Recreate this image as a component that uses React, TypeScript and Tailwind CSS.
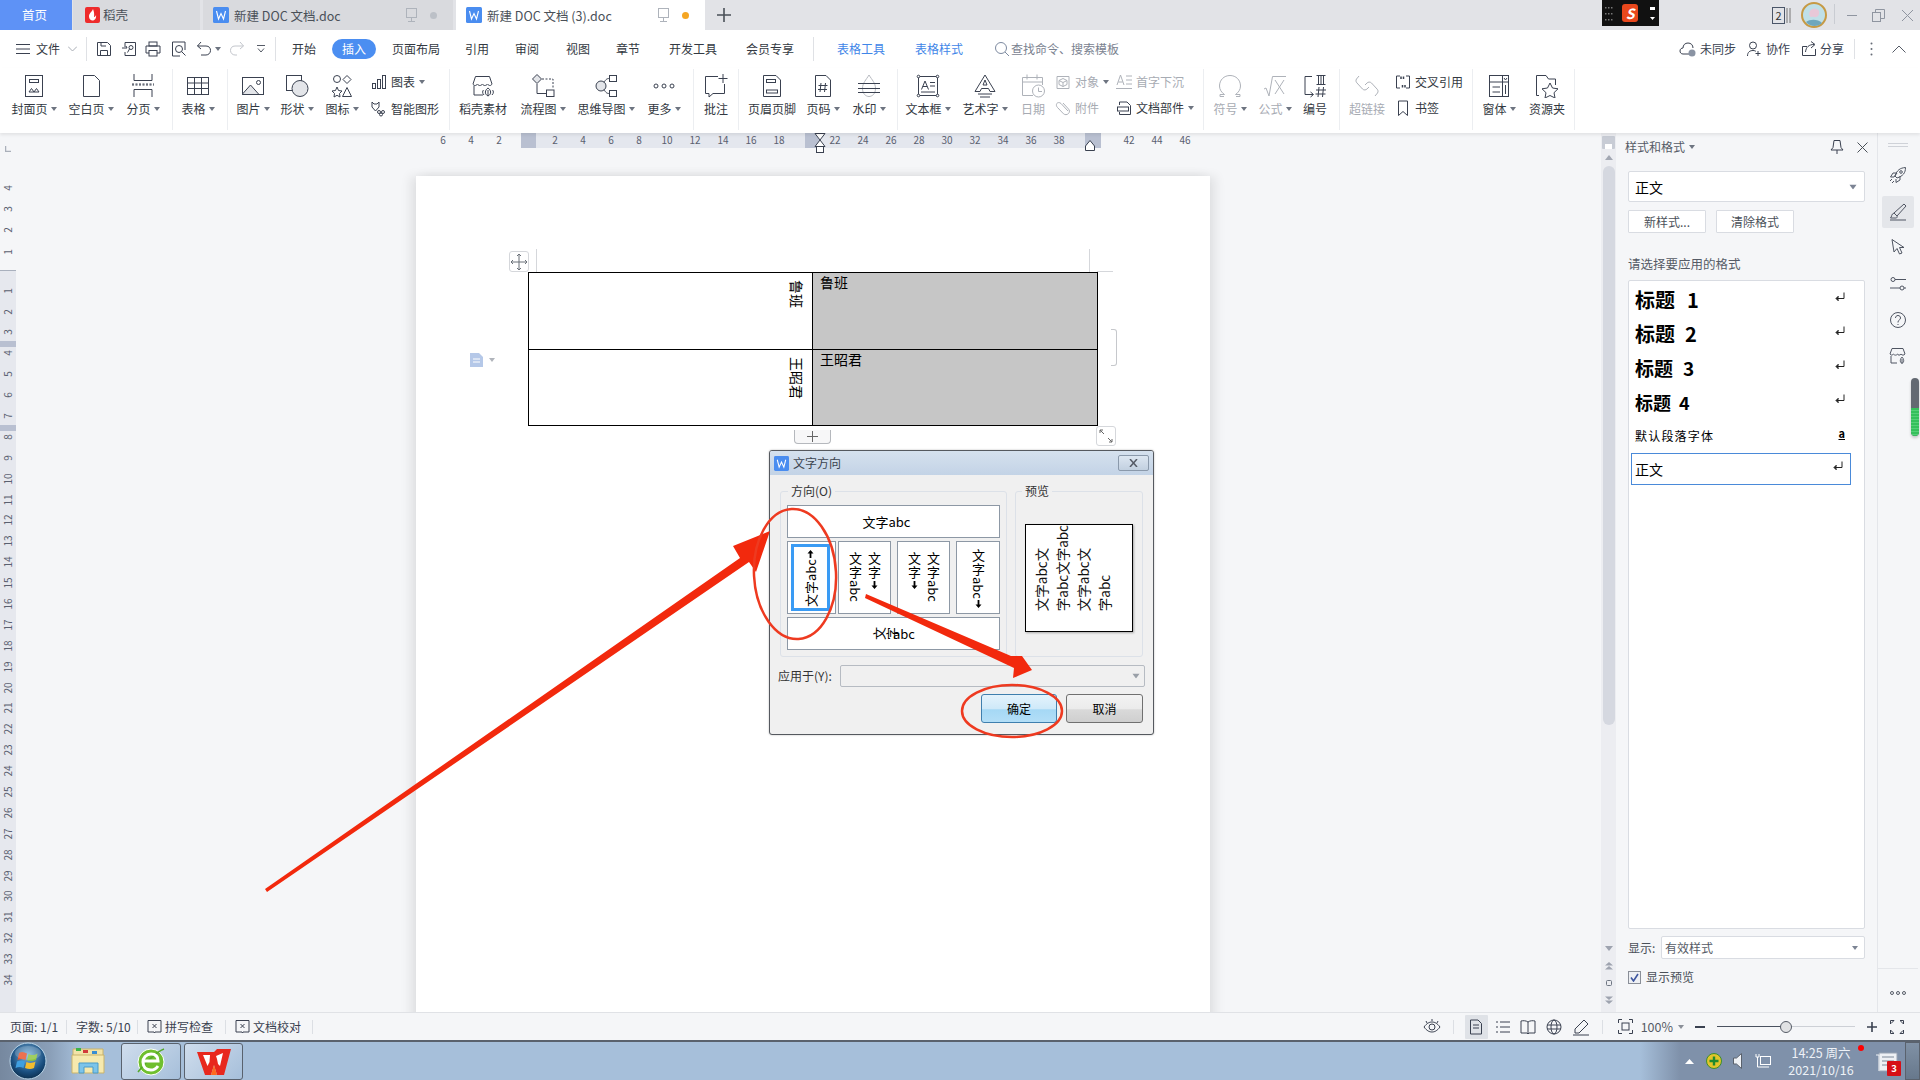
import React from "react";

type P = { children?: React.ReactNode; s?: number; className?: string };
const I = ({ children, s = 24, className }: P) => (
  <svg width={s} height={s} viewBox={`0 0 ${s} ${s}`} fill="none" stroke="currentColor" strokeWidth="1" className={className}>
    {children}
  </svg>
);

const Caret = ({ className = "text-[#6d7480]" }: { className?: string }) => (
  <svg width="6" height="4" viewBox="0 0 6 4" className={className}>
    <path d="M0 0H6L3 4Z" fill="currentColor" />
  </svg>
);

const Sep = () => <div className="w-px shrink-0 my-[1px] bg-[#eceef1]" />;

function RItem({ className, icon, label, caret, off }: { className: string; icon: React.ReactNode; label: string; caret?: boolean; off?: boolean }) {
  return (
    <div className={`${className} shrink-0 flex flex-col items-center pt-[6px] ${off ? "text-[#aeb2b9]" : "text-[#3a4150]"}`}>
      <div className="h-[24px] flex items-center justify-center">{icon}</div>
      <div className={`mt-[3px] h-[16px] flex items-center gap-[3px] text-[12px] leading-[16px] whitespace-nowrap ${off ? "text-[#a7abb3]" : "text-[#333942]"}`}>
        {label}
        {caret && <Caret />}
      </div>
    </div>
  );
}

function SRow({ icon, label, caret, off }: { icon: React.ReactNode; label: string; caret?: boolean; off?: boolean }) {
  return (
    <div className={`h-[16px] flex items-center ${off ? "text-[#aeb2b9]" : "text-[#3a4150]"}`}>
      <div className="w-[16px] h-[16px] flex items-center justify-center shrink-0">{icon}</div>
      <span className={`ml-[4px] text-[12px] leading-[16px] whitespace-nowrap ${off ? "text-[#a7abb3]" : "text-[#333942]"}`}>{label}</span>
      {caret && <Caret className="ml-[4px] text-[#6d7480]" />}
    </div>
  );
}

const WIcon = ({ s = 15 }: { s?: number }) => (
  <svg width={s} height={s} viewBox="0 0 16 16">
    <rect width="16" height="16" rx="1.5" fill="#4a8df0" />
    <path d="M3.5 4L5.5 12L8 6.5L10.5 12L12.5 4" stroke="#fff" strokeWidth="1.1" fill="none" />
  </svg>
);

function Tab({ className, icon, label, state }: { className: string; icon: React.ReactNode; label: string; state?: "gray" | "orange" }) {
  return (
    <div className={`${className} h-full flex items-center pl-[10px] shrink-0`}>
      {icon}
      <span className="ml-[5px] mt-px text-[12.5px] text-[#4a5058] leading-[16px] whitespace-nowrap">{label}</span>
      <div className="ml-auto flex items-center gap-[12px] pr-[16px] text-[#aeb3bb]">
        <svg width="13" height="16" viewBox="0 0 13 16" fill="none" stroke="currentColor">
          <rect x="1.5" y="1.5" width="10" height="9" />
          <path d="M6.5 10.5V14M3 14.5H10" />
        </svg>
        <div className={`w-[7px] h-[7px] rounded-full ${state === "orange" ? "bg-[#f5a623]" : "bg-[#bcc0c7]"}`} />
      </div>
    </div>
  );
}

const MTab = ({ className, children, blue }: { className: string; children: React.ReactNode; blue?: boolean }) => (
  <div className={`${className} shrink-0 text-center text-[12px] leading-[16px] ${blue ? "text-[#3f86e8]" : "text-[#333942]"}`}>{children}</div>
);

function DownArrow() {
  return (
    <svg width="7" height="8" viewBox="0 0 7 8" className="my-[1px] shrink-0">
      <path d="M3.5 8L0.5 4.5H2.6V0H4.4V4.5H6.5Z" fill="#000" />
    </svg>
  );
}

function UpArrow() {
  return (
    <svg width="7" height="8" viewBox="0 0 7 8" className="my-[1px] shrink-0">
      <path d="M3.5 0L0.5 3.5H2.6V8H4.4V3.5H6.5Z" fill="#000" />
    </svg>
  );
}

function VCol({ abc, arrow }: { abc?: boolean; arrow?: boolean }) {
  return (
    <div className="flex flex-col items-center w-[14px]">
      <span className="[writing-mode:vertical-rl] [text-orientation:upright] tracking-[1px] text-[13px] leading-[14px] text-black">
        文字
        {abc && <span className="[text-orientation:sideways] tracking-[0px]">abc</span>}
      </span>
      {arrow && <DownArrow />}
    </div>
  );
}

function StatusSep() {
  return <div className="w-px h-[14px] bg-[#dcdfe4] shrink-0" />;
}

const XBox = () => (
  <svg width="15" height="14" viewBox="0 0 15 14" fill="none" stroke="#3a4150">
    <path d="M1 .5H14V12H8L7.5 13L7 12H1Z" />
    <path d="M5.5 4L9.5 8M9.5 4L5.5 8" />
  </svg>
);

const Ret = () => (
  <svg width="10" height="10" viewBox="0 0 10 10" fill="none" stroke="#222">
    <path d="M9 0.5V6.5H1.5" />
    <path d="M3.5 4L1 6.5L3.5 9" fill="#222" />
  </svg>
);

export default function App() {
  const leftNums = [6, 4, 2];
  const nums1 = [2, 4, 6, 8, 10, 12, 14, 16, 18];
  const nums2 = [22, 24, 26, 28, 30, 32, 34, 36, 38];
  const vTop = [4, 3, 2, 1];
  const vBot = Array.from({ length: 34 }, (_, i) => i + 1);

  return (
    <div className="relative w-[1920px] h-[1080px] overflow-hidden flex flex-col bg-[#f5f6f8] text-[#333942] font-['Noto_Sans_CJK_SC','Noto_Sans',sans-serif]">
      {/* tabs */}
      <div className="h-[30px] shrink-0 flex bg-[#e2e3e7]">
        <div className="w-[72px] h-full bg-[#5e92f6] text-white text-[12.5px] flex items-center justify-center pr-[3px]">首页</div>
        <div className="ml-px w-[127px] h-full bg-[#d9dade] flex items-center pl-[12px]">
          <svg width="15" height="16" viewBox="0 0 15 16">
            <rect width="15" height="16" rx="2" fill="#ee2b2b" />
            <path d="M8 2C7 5 4 6 4 9.5C4 12 6 13.5 7.5 13.5C10 13.5 11.5 11 11 8C10.5 9.5 9.5 10 9 10C9.5 7 9 4.5 8 2Z" fill="#fff" />
          </svg>
          <span className="ml-[3px] mt-px text-[12.5px] text-[#4a5058]">稻壳</span>
        </div>
        <Tab className="ml-[3px] w-[250px] bg-[#d9dade]" icon={<WIcon s={16} />} label="新建 DOC 文档.doc" state="gray" />
        <Tab className="ml-[3px] w-[249px] bg-white" icon={<WIcon s={16} />} label="新建 DOC 文档 (3).doc" state="orange" />
        <div className="ml-[12px] w-[14px] flex items-center justify-center text-[#4a5058]">
          <svg width="14" height="14" viewBox="0 0 14 14" stroke="currentColor" strokeWidth="1.6"><path d="M7 0V14M0 7H14" /></svg>
        </div>
        <div className="ml-auto flex items-start">
          <div className="w-[57px] h-[26px] bg-[#111] flex items-center">
            <svg width="8" height="16" viewBox="0 0 8 16" fill="#777" className="ml-[3px]"><rect x="0" y="2" width="1.5" height="1.5" /><rect x="3" y="2" width="1.5" height="1.5" /><rect x="6" y="2" width="1.5" height="1.5" /><rect x="0" y="8" width="1.5" height="1.5" /><rect x="3" y="8" width="1.5" height="1.5" /><rect x="6" y="8" width="1.5" height="1.5" /><rect x="0" y="14" width="1.5" height="1.5" /><rect x="3" y="14" width="1.5" height="1.5" /><rect x="6" y="14" width="1.5" height="1.5" /></svg>
            <div className="ml-[9px] w-[16px] h-[18px] bg-[#e8471c] rounded-[3px] text-white text-[14px] font-bold leading-[18px] text-center italic">S</div>
            <div className="ml-[12px] flex flex-col items-center gap-[7px]">
              <div className="w-[5px] h-[3px] bg-white" />
              <svg width="5" height="3" viewBox="0 0 5 3"><path d="M0 0H5L2.5 3Z" fill="#fff" /></svg>
            </div>
          </div>
          <div className="ml-[113px] mt-[7px] w-[13px] h-[17px] border border-[#4a5568] text-[11px] leading-[15px] text-center text-[#333]">2</div>
          <svg width="8" height="17" viewBox="0 0 8 17" className="mt-[7px]" stroke="#777"><path d="M2 1V16M5 1V16" /></svg>
          <svg width="26" height="26" viewBox="0 0 26 26" className="ml-[8px] mt-[2px]">
            <circle cx="13" cy="13" r="12" fill="#bfe0e8" stroke="#c69a45" strokeWidth="2" />
            <path d="M8 12C9 6 15 5 18 9C19 13 16 16 13 15C10 14 10 17 8 12Z" fill="#e8c8d8" />
            <path d="M5 20C9 17 17 17 21 21C17 25 9 25 5 20Z" fill="#6fa7bd" />
          </svg>
          <div className="ml-[7px] mt-[4px] w-px h-[20px] bg-[#c9ccd2]" />
          <div className="ml-[12px] mt-[15px] w-[10px] h-px bg-[#8f95a0]" />
          <svg width="13" height="13" viewBox="0 0 13 13" fill="none" stroke="#8f95a0" className="ml-[15px] mt-[9px]"><rect x=".5" y="3.5" width="8" height="9" /><path d="M3.5 3.5V.5H12.5V9.5H8.5" /></svg>
          <svg width="13" height="13" viewBox="0 0 13 13" fill="none" stroke="#8f95a0" className="ml-[16px] mt-[9px] mr-[6px]"><path d="M1 1L12 12M12 1L1 12" /></svg>
        </div>
      </div>

      {/* menu row */}
      <div className="h-[38px] shrink-0 bg-white flex items-center relative text-[#3a4150]">
        <svg width="14" height="10" viewBox="0 0 14 10" stroke="currentColor" className="ml-[16px] shrink-0"><path d="M0 .5H14M0 5H14M0 9.5H14" /></svg>
        <span className="ml-[6px] text-[12px] leading-[16px] text-[#333942]">文件</span>
        <svg width="9" height="6" viewBox="0 0 9 6" fill="none" stroke="#a8adb5" className="ml-[8px]"><path d="M0 .5L4.5 5L9 .5" /></svg>
        <div className="ml-[9px] w-px h-[24px] bg-[#dfe1e5]" />
        <I s={16} className="ml-[9px]"><path d="M1.5 1.5H11.5L14.5 4.5V14.5H1.5Z" /><path d="M4.5 14.5V9.5H11.5V14.5M5 1.5V5H10" /></I>
        <I s={16} className="ml-[9px]"><path d="M4 6V1.5H14.5V14.5H4V11" /><path d="M1 7H6L5 5M1 7" /><circle cx="10" cy="6.5" r="2" /><path d="M8.5 8L6.5 11.5" /></I>
        <I s={16} className="ml-[8px]"><rect x="4" y="1" width="8" height="4" /><path d="M4 12H1V5H15V12H12" /><rect x="4" y="9.5" width="8" height="5.5" /></I>
        <I s={16} className="ml-[10px]"><path d="M14 9V1H1.5V15H9" /><circle cx="8" cy="8" r="3.5" /><path d="M10.5 10.5L14.5 14.5" /></I>
        <I s={16} className="ml-[9px]"><path d="M5 1L1.5 5L5 8" /><path d="M1.5 5H10C13 5 14.5 7 14.5 9.5C14.5 12 12.5 14 10 14H5" /></I>
        <Caret className="ml-[3px] text-[#6d7480]" />
        <I s={16} className="ml-[8px] text-[#c3c6cc]"><path d="M11 1L14.5 5L11 8" /><path d="M14.5 5H6C3 5 1.5 7 1.5 9.5C1.5 12 3.5 14 6 14H8" /></I>
        <svg width="8" height="8" viewBox="0 0 8 8" fill="none" stroke="#555b66" className="ml-[12px]"><path d="M0 .5H8M1 3.5L4 7L7 3.5" /></svg>
        <div className="ml-[10px] w-px h-[24px] bg-[#dfe1e5]" />
        <MTab className="w-[56px]">开始</MTab>
        <div className="w-[44px] h-[20px] rounded-full bg-[#4b8ef1] text-white text-[12px] leading-[20px] text-center shrink-0">插入</div>
        <MTab className="w-[80px]">页面布局</MTab>
        <MTab className="w-[42px]">引用</MTab>
        <MTab className="w-[58px]">审阅</MTab>
        <MTab className="w-[44px]">视图</MTab>
        <MTab className="w-[56px]">章节</MTab>
        <MTab className="w-[74px]">开发工具</MTab>
        <MTab className="w-[80px]">会员专享</MTab>
        <div className="ml-[3px] w-px h-[24px] bg-[#dfe1e5]" />
        <MTab blue className="w-[94px]">表格工具</MTab>
        <MTab blue className="w-[62px]">表格样式</MTab>
        <I s={16} className="ml-[24px] text-[#7d8aa0]"><circle cx="7" cy="7" r="5.5" /><path d="M11 11L15 15" /></I>
        <span className="ml-px text-[12px] leading-[16px] text-[#7a8290] whitespace-nowrap">查找命令、搜索模板</span>
        <div className="ml-auto flex items-center">
          <I s={18}><path d="M12 14H4C2 14 1 12.5 1 11C1 9 2.5 8 4 8C4 5 6 3 9 3C12 3 14 5 14 8" /><circle cx="13" cy="13" r="3.5" fill="#8a93a3" stroke="none" /></I>
          <span className="ml-[3px] text-[12px] leading-[16px]">未同步</span>
          <I s={16} className="ml-[10px]"><circle cx="7" cy="4.5" r="3.5" /><path d="M1.5 15C1.5 11 4 9.5 7 9.5C8.5 9.5 9.5 10 10 10.5M12 10V15M9.5 12.5H14.5" /></I>
          <span className="ml-[4px] text-[12px] leading-[16px]">协作</span>
          <I s={16} className="ml-[11px]"><path d="M14.5 8V14.5H1.5V5.5H6" /><path d="M4.5 11C5 6 8 3.5 13 3.5M10 .5L14 3.5L10 7" /></I>
          <span className="ml-[3px] text-[12px] leading-[16px]">分享</span>
          <div className="ml-[10px] w-px h-[20px] bg-[#dfe1e5]" />
          <svg width="3" height="14" viewBox="0 0 3 14" fill="#666c77" className="ml-[15px]"><circle cx="1.5" cy="1.5" r="1" /><circle cx="1.5" cy="7" r="1" /><circle cx="1.5" cy="12.5" r="1" /></svg>
          <svg width="14" height="8" viewBox="0 0 14 8" fill="none" stroke="#555b66" className="ml-[19px] mr-[14px]"><path d="M.5 7.5L7 1L13.5 7.5" /></svg>
        </div>
      </div>

      {/* ribbon */}
      <div className="h-[65px] shrink-0 bg-white flex pb-[2px] relative z-10 shadow-[0_2px_3px_rgba(0,0,0,0.08)]">
        <div className="w-[6px] shrink-0" />
        <RItem className="w-[56px]" caret label="封面页" icon={<I><rect x="3.5" y="1.5" width="17" height="21" /><rect x="7.5" y="5.5" width="9" height="3" /><path d="M7 18L9.5 14.5L12 18L14.5 14.5L17 18H7Z" /></I>} />
        <RItem className="w-[58px]" caret label="空白页" icon={<I><path d="M4.5 1.5H15.5L20.5 6.5V22.5H4.5Z" /></I>} />
        <RItem className="w-[46px]" caret label="分页" icon={<I><path d="M3 0V6.5H21V0M3 23V15.5H21V23" /><path d="M1 11H23" strokeDasharray="2 1.5" /><path d="M1 10H23" strokeDasharray="2 1.5" /></I>} />
        <div className="w-[6px] shrink-0" />
        <Sep />
        <RItem className="w-[50px]" caret label="表格" icon={<I><rect x="1.5" y="3.5" width="21" height="17" /><path d="M1.5 9H22.5M1.5 14.5H22.5M8.5 3.5V20.5M15.5 3.5V20.5" /></I>} />
        <div className="w-[4px] shrink-0" />
        <Sep />
        <RItem className="w-[50px]" caret label="图片" icon={<I><rect x="1.5" y="3.5" width="21" height="17" /><path d="M1.5 20L9.5 11L18 20.5H1.5Z" fill="#e3e5e9" /><circle cx="17.5" cy="8.5" r="2" /></I>} />
        <RItem className="w-[38px]" caret label="形状" icon={<I><rect x="1.5" y="1.5" width="15" height="15" /><circle cx="15" cy="14.5" r="8" fill="#e3e5e9" /></I>} />
        <RItem className="w-[52px]" caret label="图标" icon={<I><circle cx="7" cy="5" r="3.5" /><path d="M17 1.5L21 5.5L17 9.5L13 5.5Z" /><path d="M7 13L8.5 16.5L12 17L9.5 19.5L10 23L7 21.3L4 23L4.5 19.5L2 17L5.5 16.5Z" /><path d="M17 13.5L21.5 22.5H12.5Z" /></I>} />
        <div className="w-[81px] shrink-0 flex flex-col pt-[6px] pl-[3px] gap-[11px]">
          <SRow label="图表" caret icon={<I s={16}><rect x="1.5" y="9.5" width="3" height="5" /><rect x="6.5" y="5.5" width="3" height="9" /><rect x="11.5" y="1.5" width="3" height="13" /></I>} />
          <SRow label="智能图形" icon={<I s={16}><path d="M1 1L3 3H6L8 1V6L4.5 10L1 6Z" /><circle cx="8" cy="11" r="1.5" /><circle cx="12" cy="11" r="1.5" /><circle cx="10" cy="13.5" r="1.5" /></I>} />
        </div>
        <Sep />
        <RItem className="w-[66px]" label="稻壳素材" icon={<I><path d="M2 10L4.5 2.5H18.5L21 10C20 12 18 12 16.5 10C15 12 12.5 12 11.5 10C10 12 7.5 12 6.5 10C5 12 3 12 2 10Z" /><path d="M3 11.5V21H12" /><path d="M17 22C13 20 14 16 17 14C20 16 21 20 17 22ZM17 16V22" /><path d="M13 21C11 19 11.5 17 12.5 16M21 21C23 19 22.5 17 21.5 16" /></I>} />
        <RItem className="w-[54px]" caret label="流程图" icon={<I><path d="M6 0.5L10.5 5L6 9.5L1.5 5Z" fill="#e3e5e9" /><path d="M6 10V19.5H15" /><path d="M11 5H22V14" strokeDasharray="2 1.5" /><rect x="15.5" y="16" width="7.5" height="6.5" /></I>} />
        <RItem className="w-[72px]" caret label="思维导图" icon={<I><circle cx="7" cy="12" r="5" fill="#e3e5e9" /><path d="M10 8.5C12 5 13 4.5 15.5 4.5M10 15.5C12 19 13 19.5 15.5 19.5" /><rect x="15.5" y="1.5" width="7" height="6" /><rect x="15.5" y="16.5" width="7" height="6" /></I>} />
        <RItem className="w-[44px]" caret label="更多" icon={<I><circle cx="4" cy="12" r="2" /><circle cx="12" cy="12" r="2" /><circle cx="20" cy="12" r="2" /></I>} />
        <div className="w-[7px] shrink-0" />
        <Sep />
        <RItem className="w-[44px]" label="批注" icon={<I><path d="M14 2.5H1.5V19.5H5V23L9 19.5H20.5V10" /><path d="M19 0V9M14.5 4.5H23.5" /></I>} />
        <Sep />
        <RItem className="w-[66px]" label="页眉页脚" icon={<I><path d="M3.5 1.5H16L20.5 6V22.5H3.5Z" /><rect x="6.5" y="5.5" width="9" height="3" /><rect x="6.5" y="16" width="11" height="3" /></I>} />
        <RItem className="w-[36px]" caret label="页码" icon={<I><path d="M4.5 1.5H15L19.5 6V22.5H4.5Z" /><path d="M10 9L9 18M14.5 9L13.5 18M7.5 11.5H16.5M7 15.5H16" /></I>} />
        <RItem className="w-[56px]" caret label="水印" icon={<I><path d="M12 1C9 6 5.5 9 5.5 14.5C5.5 20 9 22.5 12 22.5C15 22.5 18.5 20 18.5 14.5C18.5 9 15 6 12 1Z" stroke="#b6b9bf" /><path d="M1 9.5H23M1 14.5H23M1 18.5H23" /></I>} />
        <Sep />
        <RItem className="w-[60px]" caret label="文本框" icon={<I><rect x="2.5" y="2.5" width="19" height="19" /><path d="M5.5 15.5L9 7L12.5 15.5M6.8 12.5H11.2M14 8.5H19M14 12H19M5 18H19" /><circle cx="2.5" cy="2.5" r="1.3" fill="#fff" /><circle cx="21.5" cy="2.5" r="1.3" fill="#fff" /><circle cx="2.5" cy="21.5" r="1.3" fill="#fff" /><circle cx="21.5" cy="21.5" r="1.3" fill="#fff" /></I>} />
        <RItem className="w-[54px]" caret label="艺术字" icon={<I><path d="M12 1L22 17.5H17L15.5 14.5H8.5L7 17.5H2Z" /><path d="M10 11L12 6L14 11Z" /><path d="M5 20H19M7 23H17" /></I>} />
        <RItem off className="w-[42px]" label="日期" icon={<I><path d="M12 21.5H1.5V3.5H21.5V11" /><path d="M1.5 8H21.5M6 .5V5.5M16 .5V5.5" /><circle cx="17.5" cy="17" r="6" /><path d="M17.5 13.5V17.5H21" /></I>} />
        <div className="w-[59px] shrink-0 flex flex-col pt-[6px] pl-[1px] gap-[10px]">
          <SRow off caret label="对象" icon={<I s={16}><path d="M2 2.5H14V14.5H2Z" /><path d="M8 4.5L12 6.5V10.5L8 12.5L4 10.5V6.5ZM4 6.5L8 8.5L12 6.5M8 8.5V12.5" /></I>} />
          <SRow off label="附件" icon={<I s={16}><path d="M13 11L6 3.5C4.5 2 2.5 2.5 1.8 3.5C1 5 1.5 6.5 2.5 7.5L8.5 13.8C10 15 12 15 13.5 13.5C15 12 14.5 10 13.5 9L8 3" /></I>} />
        </div>
        <div className="w-[90px] shrink-0 flex flex-col pt-[6px] pl-[3px] gap-[10px]">
          <SRow off label="首字下沉" icon={<I s={16}><path d="M1 11L4.5 1L8 11M2.3 8H6.7M10 2H16M10 6H16M10 10H16M0 14.5H16" /></I>} />
          <SRow label="文档部件" caret icon={<I s={16}><path d="M3.5 5V2H11L14.5 5.5V14.5H3.5V12" /><rect x="1.5" y="7" width="11" height="4" /></I>} />
        </div>
        <Sep />
        <RItem off className="w-[52px]" caret label="符号" icon={<I><path d="M6 22.5H2V20.5H6.5C3.5 18.5 1.5 15.5 1.5 12C1.5 6 6 1.5 12 1.5C18 1.5 22.5 6 22.5 12C22.5 15.5 20.5 18.5 17.5 20.5H22V22.5H18" /></I>} />
        <RItem off className="w-[38px]" caret label="公式" icon={<I><path d="M1 15L3 14L6 22L9.5 2.5H23" /><path d="M12 6L21 20M21 6L12 20" /></I>} />
        <RItem className="w-[42px]" label="编号" icon={<I><path d="M9 2.5H2V20.5H9" /><path d="M4 20.5H10M7.5 18L10.5 20.5L7.5 23" /><path d="M13.5 1.5H22.5M13.5 10.5H22.5M15.5 1.5V10.5M18 1.5V10.5M20.5 1.5V10.5" /><path d="M16 13L15 23M20.5 13L19.5 23M13 16H23M12.5 20H22.5" /></I>} />
        <div className="w-[3px] shrink-0" />
        <Sep />
        <RItem off className="w-[54px]" label="超链接" icon={<I><path d="M4 2L1.5 5C0.5 6.5 1 8 2 9L7.5 15C9 16.5 11 16 12 15L14 13" /><path d="M20 22L22.5 19C23.5 17.5 23 16 22 15L16.5 9C15 7.5 13 8 12 9L10 11" /></I>} />
        <div className="w-[78px] shrink-0 flex flex-col pt-[6px] pl-[1px] gap-[10px]">
          <SRow label="交叉引用" icon={<I s={16}><path d="M5 2H1.5V14H5M11 14H14.5V2H11" /><path d="M6 2.5V5M8.5 2.5V5M7.5 11V13.5M10 11V13.5" strokeWidth="1.5" /></I>} />
          <SRow label="书签" icon={<I s={16}><path d="M3.5 1H12.5V15.5L8 11.5L3.5 15.5Z" /></I>} />
        </div>
        <Sep />
        <RItem className="w-[52px]" caret label="窗体" icon={<I><rect x="2.5" y="1.5" width="19" height="21" /><path d="M2.5 8H21.5M15.5 1.5V22.5M5.5 13H13M5.5 18H13M18.5 11V20M17 4L18.5 6L20 4" /></I>} />
        <RItem className="w-[44px]" label="资源夹" icon={<I><path d="M4 21.5H1.5V1.5H11L13.5 5H20.5V11" /><path d="M15 9L17.5 14L23 14.8L19 18.7L20 24L15 21.5L10 24L11 18.7L7 14.8L12.5 14Z" /></I>} />
        <div className="w-[5px] shrink-0" />
        <Sep />
      </div>

      {/* main */}
      <div className="flex-1 min-h-0 flex">
        <div className="w-[1601px] shrink-0 flex flex-col min-h-0">
          {/* horizontal ruler */}
          <div className="h-[15px] shrink-0 flex relative text-[10px] leading-[14px] text-[#5a6070]">
            <svg width="6" height="6" viewBox="0 0 6 6" className="absolute left-[5px] top-[13px]" stroke="#aab0ba" fill="none"><path d="M.5 0V5.5H6" strokeWidth="1.5" /></svg>
            <div className="w-[429px] shrink-0" />
            {leftNums.map((n) => (
              <div key={n} className="w-[28px] text-center shrink-0">{n}</div>
            ))}
            <div className="w-[8px] shrink-0" />
            <div className="w-[580px] shrink-0 flex bg-[#e4e7ee]">
              <div className="w-[15px] bg-[#b9c0d1] shrink-0" />
              <div className="w-[5px] shrink-0" />
              {nums1.map((n) => (
                <div key={n} className="w-[28px] text-center shrink-0">{n}</div>
              ))}
              <div className="w-[12px] shrink-0" />
              <div className="w-[16px] bg-[#b9c0d1] shrink-0" />
              {nums2.map((n) => (
                <div key={n} className="w-[28px] text-center shrink-0">{n}</div>
              ))}
              <div className="w-[12px] shrink-0" />
              <div className="flex-1 bg-[#b9c0d1]" />
            </div>
            <div className="w-[14px] shrink-0" />
            {[42, 44, 46].map((n) => (
              <div key={n} className="w-[28px] text-center shrink-0">{n}</div>
            ))}
            <svg width="12" height="21" viewBox="0 0 12 21" className="absolute left-[814px] top-0" fill="#fff" stroke="#3a4150"><path d="M1 .5H11L6 7L11 13.5H1L6 7Z" /><rect x="2.5" y="13.5" width="7" height="6" /></svg>
            <svg width="10" height="11" viewBox="0 0 10 11" className="absolute left-[1085px] top-[7px]" fill="#fff" stroke="#3a4150"><path d="M5 .5L9.5 6V10.5H.5V6Z" /></svg>
          </div>
          <div className="flex-1 min-h-0 flex">
            {/* vertical ruler */}
            <div className="w-[16px] shrink-0 flex flex-col text-[10px] text-[#5a6070]">
              <div className="h-[29px] shrink-0" />
              {vTop.map((n) => (
                <div key={n} className="h-[21.3px] shrink-0 flex items-center justify-center"><span className="-rotate-90 leading-[10px]">{n}</span></div>
              ))}
              <div className="h-[9px] shrink-0 border-b border-[#a9b0bd]" />
              <div className="flex-1 min-h-0 bg-[#e6e8ee] relative pt-[9px]">
                <div className="absolute left-0 right-0 top-[70px] h-[6px] bg-[#b9c0d1]" />
                <div className="absolute left-0 right-0 top-[154px] h-[6px] bg-[#b9c0d1]" />
                {vBot.map((n) => (
                  <div key={n} className="relative h-[20.9px] flex items-center justify-center"><span className="-rotate-90 leading-[10px]">{n}</span></div>
                ))}
              </div>
            </div>
            {/* canvas */}
            <div className="flex-1 min-w-0 overflow-hidden">
              <div className="ml-[400px] mt-[28px] w-[794px] h-[900px] bg-white shadow-[-6px_0_10px_rgba(0,0,0,0.08),6px_0_10px_rgba(0,0,0,0.08)] pl-[112px] pt-[96px] relative">
                {/* table */}
                <div className="w-[570px] h-[154px] border border-black grid grid-cols-[284px_1fr] grid-rows-[77px_1fr] text-[14px] leading-[16px] text-black">
                  <div className="border-r border-b border-black flex justify-end pt-[7px] pr-[7px]">
                    <span className="[writing-mode:vertical-rl] [text-orientation:sideways]">鲁班</span>
                  </div>
                  <div className="bg-[#c6c6c6] border-b border-black pl-[7px] pt-[1px]">鲁班</div>
                  <div className="border-r border-black flex justify-end pt-[7px] pr-[7px]">
                    <span className="[writing-mode:vertical-rl] [text-orientation:sideways]">王昭君</span>
                  </div>
                  <div className="bg-[#c6c6c6] pl-[7px] pt-[1px]">王昭君</div>
                </div>
                {/* table handles */}
                <div className="absolute left-[93px] top-[75px] w-[20px] h-[21px] border border-[#d5d7db] rounded-[3px] bg-white flex items-center justify-center">
                  <svg width="16" height="16" viewBox="0 0 16 16" fill="none" stroke="#6a7078"><path d="M8 0V16M0 8H16M6 2L8 0L10 2M6 14L8 16L10 14M2 6L0 8L2 10M14 6L16 8L14 10" /></svg>
                </div>
                <div className="absolute left-[120px] top-[73px] w-px h-[23px] bg-[#d5d7db]" />
                <div className="absolute left-[673px] top-[73px] w-px h-[23px] bg-[#d5d7db]" />
                <div className="absolute left-[681px] top-[95px] w-[16px] h-px bg-[#d5d7db]" />
                <div className="absolute left-[695px] top-[153px] w-[6px] h-[37px] border border-l-0 border-[#c6c8cc] rounded-r-[3px]" />
                <div className="absolute left-[378px] top-[254px] w-[37px] h-[14px] border border-t-0 border-[#b5b8bd] rounded-b-[4px] bg-[#f7f7f8] flex items-center justify-center text-[#666]">
                  <svg width="11" height="11" viewBox="0 0 11 11" stroke="currentColor"><path d="M5.5 0V11M0 5.5H11" /></svg>
                </div>
                <div className="absolute left-[680px] top-[250px] w-[20px] h-[20px] border border-[#d5d7db] rounded-[3px] bg-white">
                  <svg width="18" height="18" viewBox="0 0 18 18" fill="none" stroke="#666"><path d="M3 3L7 7M3 3V6M3 3H6M15 15L11 11M15 15V12M15 15H12" /></svg>
                </div>
                <div className="absolute left-[54px] top-[177px] flex items-center gap-[6px]">
                  <svg width="13" height="14" viewBox="0 0 13 14"><path d="M0 0H9L13 4V14H0Z" fill="#b5c8e8" /><path d="M3 6H10M3 9H10" stroke="#fff" /></svg>
                  <Caret className="text-[#b0b4bb]" />
                </div>
              </div>
            </div>
          </div>
        </div>

        {/* scrollbar */}
        <div className="w-[15px] shrink-0 bg-[#ecedf1] flex flex-col items-center">
          <div className="mt-[3px] w-[13px] h-[13px] bg-[#c8ccd5] rounded-[1px] flex flex-col items-center justify-end">
            <div className="w-[7px] h-[5px] bg-white" />
          </div>
          <svg width="8" height="5" viewBox="0 0 8 5" className="mt-[6px]"><path d="M4 0L8 5H0Z" fill="#a3a8b3" /></svg>
          <div className="mt-[6px] w-[12px] h-[559px] rounded-full bg-[#d5d8e0]" />
          <div className="flex-1" />
          <svg width="8" height="5" viewBox="0 0 8 5"><path d="M4 5L8 0H0Z" fill="#9ea3af" /></svg>
          <svg width="8" height="8" viewBox="0 0 8 8" className="mt-[11px]" fill="#9ea3af"><path d="M4 0L8 3.5H0ZM4 4L8 7.5H0Z" /></svg>
          <svg width="6" height="6" viewBox="0 0 6 6" className="mt-[10px]" fill="none" stroke="#6f7683"><rect x=".5" y=".5" width="5" height="5" rx="1" /></svg>
          <svg width="8" height="8" viewBox="0 0 8 8" className="mt-[10px] mb-[8px]" fill="#9ea3af"><path d="M4 4L8 .5H0ZM4 8L8 4.5H0Z" /></svg>
        </div>

        {/* panel */}
        <div className="w-[261px] shrink-0 flex flex-col px-[12px] text-[#4a5058]">
          <div className="h-[28px] shrink-0 flex items-center -ml-[3px] -mr-[3px]">
            <span className="text-[12px] leading-[16px] text-[#555b66]">样式和格式</span>
            <Caret className="ml-[4px] text-[#6d7480]" />
            <I s={16} className="ml-auto text-[#3a4150]"><path d="M5 1.5H11L12 8.5L14 11H2L4 8.5ZM8 11V15" /></I>
            <svg width="11" height="11" viewBox="0 0 11 11" stroke="#4a5058" className="ml-[12px]"><path d="M.5 .5L10.5 10.5M10.5 .5L.5 10.5" /></svg>
          </div>
          <div className="mt-[10px] h-[31px] shrink-0 bg-white border border-[#d9dce2] rounded-[2px] flex items-center pl-[6px] pr-[8px]">
            <span className="text-[14px] leading-[18px] text-black">正文</span>
            <Caret className="ml-auto text-[#7c8494] scale-125" />
          </div>
          <div className="mt-[8px] flex gap-[10px] shrink-0">
            <div className="w-[78px] h-[23px] bg-white border border-[#d9dce2] rounded-[1px] text-[12px] leading-[21px] text-center">新样式...</div>
            <div className="w-[78px] h-[23px] bg-white border border-[#d9dce2] rounded-[1px] text-[12px] leading-[21px] text-center">清除格式</div>
          </div>
          <div className="mt-[22px] h-[17px] text-[12.5px] leading-[17px] text-[#555b66] shrink-0">请选择要应用的格式</div>
          <div className="mt-[8px] flex-1 min-h-0 bg-white border border-[#d9dce2] rounded-[2px] pt-[2px] text-black">
            {[
              { t: "标题", n: "1", c: "text-[20px] gap-[12px]" },
              { t: "标题", n: "2", c: "text-[20px] gap-[10px]" },
              { t: "标题", n: "3", c: "text-[19px] gap-[10px]" },
              { t: "标题", n: "4", c: "text-[18px] gap-[8px]" },
            ].map((r) => (
              <div key={r.n} className="h-[34px] flex items-center pl-[6px] pr-[19px]">
                <span className={`flex items-center font-bold leading-[24px] ${r.c}`}>
                  <span>{r.t}</span>
                  <span>{r.n}</span>
                </span>
                <div className="ml-auto -mt-[7px]"><Ret /></div>
              </div>
            ))}
            <div className="h-[34px] flex items-center pl-[6px] pr-[19px]">
              <span className="text-[12px] tracking-[1.2px] leading-[16px]">默认段落字体</span>
              <span className="ml-auto -mt-[6px] text-[11px] leading-[12px] underline font-bold">a</span>
            </div>
            <div className="ml-[2px] w-[220px] h-[32px] border border-[#4a8ad9] flex items-center pl-[3px] pr-[7px]">
              <span className="text-[14px] leading-[18px]">正文</span>
              <div className="ml-auto -mt-[7px]"><Ret /></div>
            </div>
          </div>
          <div className="mt-[7px] flex items-center h-[23px] shrink-0">
            <span className="w-[33px] text-[12px] leading-[16px]">显示:</span>
            <div className="flex-1 h-[23px] bg-white border border-[#d9dce2] rounded-[2px] flex items-center pl-[3px] pr-[6px]">
              <span className="text-[12px] leading-[16px] text-[#555b66]">有效样式</span>
              <Caret className="ml-auto text-[#7c8494]" />
            </div>
          </div>
          <div className="mt-[11px] mb-[28px] flex items-center h-[14px] shrink-0">
            <div className="w-[13px] h-[13px] border border-[#8a8f98] bg-[#eef0f4] flex items-center justify-center">
              <svg width="9" height="9" viewBox="0 0 9 9" fill="none" stroke="#3e569f" strokeWidth="1.6"><path d="M1 4.5L3.5 8L8 1" /></svg>
            </div>
            <span className="ml-[5px] text-[12px] leading-[16px]">显示预览</span>
          </div>
        </div>

        {/* right strip */}
        <div className="flex-1 min-w-0 border-l border-[#e4e6ea] flex flex-col items-center pr-[2px] text-[#4f5562] relative">
          <div className="mt-[10px] w-[20px] h-[4px] border-y border-[#cfd2d8]" />
          <I s={18} className="mt-[19px]"><path d="M6 10C8 4 11 2 16.5 1.5C16.5 7 14 10 8 12ZM4 7H8L5 11H1.5ZM11 10V14L7 16.5V13M3 13L1 15M5 15L3 17" /><circle cx="12" cy="6" r="1.3" /></I>
          <div className="mt-[12px] w-[32px] h-[32px] bg-[#e4e6ea] rounded-[2px] flex items-center justify-center">
            <I s={18}><path d="M15 1L5 10L8 13L17 3ZM5 10C2 11 3 14 1.5 15H7C8 15 8.5 14 8 13M1 17H17" /></I>
          </div>
          <I s={18} className="mt-[10px]"><path d="M3 1.5L15 9.5H10.5L13 15L10.5 16L8 10.5L5 14Z" /></I>
          <I s={18} className="mt-[20px]"><circle cx="4" cy="3.5" r="2" /><circle cx="13" cy="12" r="2" /><path d="M6 3.5H17M1 12H11M15 12H17" /></I>
          <I s={18} className="mt-[17px]"><circle cx="9" cy="9" r="7.5" /><path d="M6.5 7C6.5 5.5 7.5 4.5 9 4.5C10.5 4.5 11.5 5.5 11.5 7C11.5 9 9 9 9 11V11.5M9 13V14" /></I>
          <I s={18} className="mt-[18px]"><path d="M1 7L3 1.5H14L16 7C15 8.5 13 8.5 12 7C11 8.5 9 8.5 8.5 7C7.5 8.5 5.5 8.5 4.5 7C3.5 8.5 2 8.5 1 7ZM2 9V16H8" /><path d="M13 16.5C10.5 15 11 12 13 10C15 12 15.5 15 13 16.5ZM13 12V16.5" /></I>
          <div className="absolute left-[33px] top-[245px] w-[8px] h-[58px] rounded-full bg-[#636972] overflow-hidden flex flex-col justify-end shadow-[0_2px_3px_rgba(0,0,0,0.2)]">
            <div className="h-[28px] bg-[repeating-linear-gradient(180deg,#35c05c_0,#35c05c_2px,#54d077_2px,#54d077_3px)]" />
          </div>
          <div className="flex-1" />
          <div className="w-full h-px bg-[#e4e6ea]" />
          <svg width="16" height="4" viewBox="0 0 16 4" fill="none" stroke="#555b66" className="mt-[22px] mb-[17px]"><circle cx="2" cy="2" r="1.5" /><circle cx="8" cy="2" r="1.5" /><circle cx="14" cy="2" r="1.5" /></svg>
        </div>
      </div>

      {/* status */}
      <div className="h-[28px] shrink-0 border-t border-[#e0e2e6] bg-[#f5f6f8] flex items-center text-[12px] leading-[16px] text-[#3a4150]">
        <div className="w-[66px] pl-[10px] shrink-0">页面: 1/1</div>
        <StatusSep />
        <div className="w-[70px] pl-[9px] shrink-0 whitespace-nowrap">字数: 5/10</div>
        <StatusSep />
        <div className="w-[87px] pl-[9px] flex items-center gap-[3px] shrink-0"><XBox /><span>拼写检查</span></div>
        <StatusSep />
        <div className="w-[86px] pl-[9px] flex items-center gap-[3px] shrink-0"><XBox /><span>文档校对</span></div>
        <StatusSep />
        <div className="ml-auto flex items-center">
          <I s={18}><path d="M1 9C4 5 6.5 4 9 4C11.5 4 14 5 17 9C14 13 11.5 14 9 14C6.5 14 4 13 1 9Z" /><circle cx="9" cy="9" r="3" /><path d="M3 3L4 5M15 3L14 5M9 1V3" /></I>
          <div className="ml-[12px]"><StatusSep /></div>
          <div className="ml-[11px] w-[23px] h-[24px] bg-[#dfe2e7] flex items-center justify-center rounded-[1px]">
            <I s={16}><path d="M2.5 1H10L13.5 4.5V15H2.5Z" /><path d="M5 6H11M5 9H11" /></I>
          </div>
          <I s={16} className="ml-[7px]"><path d="M5 3H15M5 8H15M5 13H15M1 3H3M1 8H3M1 13H3" /></I>
          <I s={16} className="ml-[9px]"><path d="M8 3C6 1.5 3 1.5 1 2V14H7L8 15L9 14H15V2C13 1.5 10 1.5 8 3ZM8 3V14" /></I>
          <I s={16} className="ml-[10px]"><circle cx="8" cy="8" r="7" /><ellipse cx="8" cy="8" rx="3" ry="7" /><path d="M1 6H15M1 10H15" /></I>
          <I s={18} className="ml-[10px]"><path d="M12 2L16 6L7 15H3V11ZM1 17H17" /></I>
          <div className="ml-[12px]"><StatusSep /></div>
          <svg width="15" height="15" viewBox="0 0 15 15" fill="none" stroke="#3a4150" className="ml-[15px]"><path d="M.5 4V.5H4M11 .5H14.5V4M14.5 11V14.5H11M4 14.5H.5V11" /><rect x="4" y="4" width="7" height="7" /></svg>
          <span className="ml-[8px] text-[12.5px] text-[#555b66]">100%</span>
          <Caret className="ml-[5px] text-[#8a8f98]" />
          <div className="ml-[11px] w-[10px] h-[2px] bg-[#3a4150]" />
          <div className="ml-[12px] w-[138px] h-[18px] flex items-center relative">
            <div className="w-[69px] h-px bg-[#4a5260]" />
            <div className="flex-1 h-px bg-[#cdd0d6]" />
            <div className="absolute left-[63px] w-[12px] h-[12px] rounded-full bg-[#e1e2e4] border border-[#555b66]" />
          </div>
          <svg width="10" height="10" viewBox="0 0 10 10" stroke="#3a4150" strokeWidth="1.6" className="ml-[12px]"><path d="M5 0V10M0 5H10" /></svg>
          <svg width="14" height="14" viewBox="0 0 14 14" fill="none" stroke="#3a4150" className="ml-[13px] mr-[16px]"><path d="M.5 4V.5H4L1 3.5M10 .5H13.5V4L10.5 1M13.5 10V13.5H10L13 10.5M4 13.5H.5V10L3.5 13" /></svg>
        </div>
      </div>

      {/* taskbar */}
      <div className="h-[40px] shrink-0 border-t-2 border-[#5a626d] flex items-stretch bg-[linear-gradient(90deg,#76889f_0,#8a9fb8_50px,#a6bfda_80px,#a6bfda_1640px,#7f91aa_1680px,#7f91aa_100%)]">
        <div className="w-[55px] shrink-0 flex items-center justify-center">
          <svg width="38" height="38" viewBox="0 0 38 38">
            <defs>
              <radialGradient id="orb" cx="50%" cy="35%" r="65%"><stop offset="0" stopColor="#7fb5dd" /><stop offset="0.7" stopColor="#1a4f80" /><stop offset="1" stopColor="#0d3050" /></radialGradient>
            </defs>
            <circle cx="19" cy="19" r="18" fill="url(#orb)" stroke="#bcd7ea" />
            <path d="M10 11C13 9 15 10 18 11.5L16.5 18C14 16.5 11.5 16.5 8.5 18Z" fill="#e8532a" />
            <path d="M19.5 12C22 13.5 25 13.5 28.5 11.5L27 18C24 19.5 21 19 18 18.5Z" fill="#8cc43f" />
            <path d="M8 19.5C11 18 13.5 18 16 19.5L14.5 26C12 24.5 9.5 24.5 6.5 26Z" fill="#3f9fe0" />
            <path d="M17.5 20C20 21 23 21.5 26.5 19.5L25 26C22 27.5 19 27 16 26Z" fill="#f5bd2e" />
            <ellipse cx="19" cy="11" rx="13" ry="7" fill="#fff" opacity="0.18" />
          </svg>
        </div>
        <div className="w-[66px] shrink-0 flex items-center justify-center">
          <svg width="34" height="30" viewBox="0 0 34 30">
            <path d="M2 3H32V10H2Z" fill="#f2e3a8" stroke="#c9b36a" />
            <rect x="5" y="2" width="5" height="3" fill="#3db34a" />
            <rect x="12" y="4" width="5" height="3" fill="#d23a3a" />
            <rect x="21" y="5" width="5" height="3" fill="#3a8ed2" />
            <path d="M1 9H33V27H1Z" fill="#f6e9ae" stroke="#c9b36a" />
            <path d="M8 27V17H27V27H22V21H13V27Z" fill="#7cc4ea" stroke="#4b9bc9" />
          </svg>
        </div>
        <div className="w-[60px] shrink-0 rounded-[3px] border border-[#59626e] bg-[linear-gradient(135deg,#cfdded,#a6bfda)] flex items-center justify-center mt-px">
          <svg width="30" height="32" viewBox="0 0 30 32">
            <circle cx="15" cy="16" r="13" fill="#6fbf2e" stroke="#fff" />
            <path d="M2 26C8 18 20 6 28 3" stroke="#55a92a" fill="none" strokeWidth="1.5" />
            <path d="M7 15H22C22 10 19 8 15 8C10 8 7 12 7 16C7 21 10 24 15 24C18 24 20 23 22 20" fill="none" stroke="#fff" strokeWidth="3" />
          </svg>
        </div>
        <div className="ml-[3px] w-[59px] shrink-0 rounded-[3px] border border-[#59626e] bg-[linear-gradient(135deg,#cfdded,#a6bfda)] flex items-center justify-center mt-px">
          <svg width="34" height="26" viewBox="0 0 34 26">
            <path d="M0 3H17L20 0H34L27 26H20L17 16L14 26H8Z" fill="#e8281e" />
            <path d="M6 6H13L12.5 13L10.5 17Z" fill="#fff" />
            <path d="M19 7L26 4L23 17L21 15L20 10Z" fill="#fff" />
            <path d="M14 26L17 16L20 26Z" fill="#ff6a1f" />
          </svg>
        </div>
        <div className="ml-auto flex items-center relative">
          <svg width="9" height="5" viewBox="0 0 9 5"><path d="M4.5 0L9 5H0Z" fill="#fff" /></svg>
          <svg width="16" height="16" viewBox="0 0 16 16" className="ml-[12px]">
            <circle cx="8" cy="8" r="7.5" fill="#e3c52a" stroke="#3c8f2e" />
            <path d="M8 3.5V12.5M3.5 8H12.5" stroke="#1f8a2e" strokeWidth="2.4" />
          </svg>
          <svg width="9" height="16" viewBox="0 0 9 16" className="ml-[11px]"><path d="M8.5 0.5V15.5L3.5 11H.5V5H3.5Z" fill="#eef1f5" stroke="#5a626d" /></svg>
          <svg width="16" height="16" viewBox="0 0 16 16" fill="none" stroke="#fff" className="ml-[13px]"><rect x="5.5" y="3.5" width="10" height="8" /><path d="M1 1V4H4V1M2.5 4V14H14" /></svg>
          <div className="ml-[4px] w-[92px] text-center text-[#eef2f7] text-[12.5px] leading-[17px]">
            <div>14:25 周六</div>
            <div>2021/10/16</div>
          </div>
          <div className="absolute right-[56px] top-[3px] w-[6px] h-[6px] rounded-full bg-[#ff0000]" />
          <div className="ml-[9px] w-[24px] h-[30px] relative">
            <svg width="22" height="22" viewBox="0 0 22 22" className="absolute left-0 top-[4px]"><path d="M3 3H21V21H3Z" fill="#eef1f5" stroke="#98a3b3" /><path d="M0 5H3V21" fill="none" stroke="#eef1f5" /><path d="M6 7H18M6 11H18M6 15H14" stroke="#7d8898" /></svg>
            <div className="absolute left-[11px] top-[15px] w-[14px] h-[15px] bg-[#d60f16] text-white text-[9.5px] leading-[15px] text-center font-bold rounded-[1px]">3</div>
          </div>
          <div className="ml-[5px] w-[15px] h-full border border-[#5a626d] bg-[linear-gradient(180deg,#8091a5,#67788c)]" />
        </div>
      </div>

      {/* dialog */}
      <div className="absolute left-[769px] top-[450px] w-[385px] h-[285px] border border-[#55595f] rounded-[3px] bg-[#f0f0f0] flex flex-col text-[12px] text-black shadow-[0_0_2px_rgba(0,0,0,0.3)]">
        <div className="h-[24px] shrink-0 bg-[linear-gradient(180deg,#d5e1ee,#c3d3e6)] flex items-center pl-[4px] pr-[4px] rounded-t-[2px]">
          <WIcon s={15} />
          <span className="ml-[4px] text-[12px] leading-[16px] text-[#3c4450]">文字方向</span>
          <div className="ml-auto w-[31px] h-[16px] border border-[#8a99ab] rounded-[2px] bg-[linear-gradient(180deg,#dce6f1,#c2d0e0)] flex items-center justify-center">
            <svg width="9" height="8" viewBox="0 0 9 8" stroke="#555b66" strokeWidth="1.5"><path d="M1 0L8 8M8 0L1 8" /></svg>
          </div>
        </div>
        <div className="flex gap-[8px] pl-[10px] mt-[9px]">
          <fieldset className="w-[227px] h-[173px] border border-[#dce1e8] rounded-[3px] pl-[6px] shrink-0">
            <legend className="ml-[1px] px-[3px] text-[12px] leading-[14px] text-[#333]">方向(O)</legend>
            <div className="w-[213px] mt-[7px] flex flex-col gap-[3px]">
              <div className="h-[33px] border border-[#8d98a5] bg-white text-[13px] leading-[31px] text-center pr-[14px]">文字abc</div>
              <div className="h-[73px] flex">
                <div className="w-[49px] shrink-0 border border-[#8d98a5] bg-white pl-[3px] py-[2px]">
                  <div className="w-[39px] h-full border-[3px] border-[#3a9bf4] flex flex-col items-center pt-[2px]">
                    <UpArrow />
                    <span className="[writing-mode:vertical-rl] [text-orientation:sideways] rotate-180 text-[13px] leading-[14px]">文字abc</span>
                  </div>
                </div>
                <div className="ml-[2px] w-[53px] shrink-0 border border-[#8d98a5] bg-white flex justify-center gap-[5px] pt-[10px]">
                  <VCol abc />
                  <VCol arrow />
                </div>
                <div className="ml-[6px] w-[53px] shrink-0 border border-[#8d98a5] bg-white flex justify-center gap-[5px] pt-[10px]">
                  <VCol arrow />
                  <VCol abc />
                </div>
                <div className="ml-[6px] w-[44px] shrink-0 border border-[#8d98a5] bg-white flex flex-col items-center pt-[7px]">
                  <VCol abc arrow />
                </div>
              </div>
              <div className="h-[33px] border border-[#8d98a5] bg-white text-[13px] leading-[31px] flex justify-center items-center pl-[7px]">
                <span className="[writing-mode:vertical-rl] [text-orientation:upright] -rotate-90 whitespace-nowrap w-[14px] h-[26px] leading-[14px] mx-[6px]">文字</span>
                <span>abc</span>
              </div>
            </div>
          </fieldset>
          <fieldset className="w-[128px] h-[173px] border border-[#dce1e8] rounded-[3px] shrink-0">
            <legend className="ml-[6px] px-[3px] text-[12px] leading-[14px] text-[#333]">预览</legend>
            <div className="ml-[9px] mt-[26px] w-[108px] h-[108px] border border-black bg-white shadow-[1px_1px_2px_rgba(0,0,0,0.3)] flex items-end justify-center overflow-hidden pb-[20px] pr-[12px]">
              <div className="[writing-mode:vertical-rl] [text-orientation:sideways] rotate-180 text-[13.5px] leading-[21px] text-[#111] whitespace-nowrap">
                <div>文字abc文</div>
                <div>字abc文字abc</div>
                <div>文字abc文</div>
                <div>字abc</div>
              </div>
            </div>
          </fieldset>
        </div>
        <div className="mt-[8px] ml-[8px] flex items-center h-[22px] shrink-0">
          <span className="w-[62px] text-[12px] leading-[16px] text-[#333]">应用于(Y):</span>
          <div className="w-[305px] h-[22px] border border-[#b6bbc2] rounded-[2px] bg-[#f0f0f0] flex items-center justify-end pr-[5px]">
            <Caret className="text-[#9aa0a8] scale-125" />
          </div>
        </div>
        <div className="mt-[7px] ml-[211px] flex gap-[9px]">
          <div className="w-[76px] h-[29px] border border-[#3f7fae] rounded-[3px] bg-[linear-gradient(180deg,#e4f3fc_0,#cfe9f9_50%,#a5d8f5_55%,#b3def7_100%)] text-[12px] leading-[27px] text-center">确定</div>
          <div className="w-[77px] h-[29px] border border-[#707070] rounded-[3px] bg-[linear-gradient(180deg,#f3f3f3_0,#ebebeb_50%,#d9d9d9_55%,#cfcfcf_100%)] text-[12px] leading-[27px] text-center">取消</div>
        </div>
      </div>

      {/* annotations */}
      <svg width="1920" height="1080" viewBox="0 0 1920 1080" className="absolute left-0 top-0 pointer-events-none">
        <path d="M265 889L740 558L733 546L770 531L756 572L749 562L267 892Z" fill="#f2290d" />
        <path d="M866 594L1011 656L1022 656L1032 670L1013 678L1014 668L865 598Z" fill="#f2290d" />
        <ellipse cx="795" cy="574" rx="41" ry="65" fill="none" stroke="#ee3a20" strokeWidth="2.5" transform="rotate(-3 795 574)" />
        <ellipse cx="1012" cy="711" rx="50" ry="26" fill="none" stroke="#ee3a20" strokeWidth="2.5" />
      </svg>
    </div>
  );
}
